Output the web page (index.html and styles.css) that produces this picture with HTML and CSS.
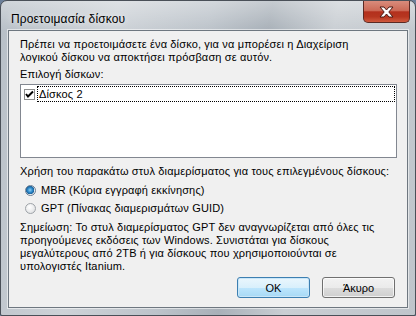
FILE: index.html
```html
<!DOCTYPE html>
<html lang="el">
<head>
    <meta charset="UTF-8">
    <meta name="viewport" content="width=device-width, initial-scale=1.0">
    <title>Προετοιμασία δίσκου</title>
    <link rel="stylesheet" href="styles.css">
</head>
<body>
<div class="window">
    <div class="titlebar">
        <span class="title">Προετοιμασία δίσκου</span>
        <div class="close-btn">
            <svg width="17" height="12" viewBox="0 0 17 12">
                <path d="M2 1 L6 1 L8.5 4 L11 1 L15 1 L10.8 6 L15 11 L11 11 L8.5 8 L6 11 L2 11 L6.2 6 Z"
                      fill="#fff" stroke="#4a1a14" stroke-width="1" stroke-linejoin="round"/>
            </svg>
        </div>
    </div>
    <div class="client">
        <p class="intro">Πρέπει να προετοιμάσετε ένα δίσκο, για να μπορέσει η Διαχείριση<br>λογικού δίσκου να αποκτήσει πρόσβαση σε αυτόν.</p>
        <div class="label">Επιλογή δίσκων:</div>
        <div class="listbox">
            <div class="list-item">
                <span class="checkbox">
                    <svg width="9" height="9" viewBox="0 0 9 9">
                        <path d="M1 4 L3 6.5 L8 1.5" fill="none" stroke="#000" stroke-width="2"/>
                    </svg>
                </span>
                <span class="item-text">Δίσκος 2</span>
            </div>
        </div>
        <div class="label style-label">Χρήση του παρακάτω στυλ διαμερίσματος για τους επιλεγμένους δίσκους:</div>
        <div class="radio-row">
            <span class="radio checked"></span>
            <span>MBR (Κύρια εγγραφή εκκίνησης)</span>
        </div>
        <div class="radio-row">
            <span class="radio"></span>
            <span>GPT (Πίνακας διαμερισμάτων GUID)</span>
        </div>
        <p class="note">Σημείωση: Το στυλ διαμερίσματος GPT δεν αναγνωρίζεται από όλες τις<br>προηγούμενες εκδόσεις των Windows. Συνιστάται για δίσκους<br>μεγαλύτερους από 2TB ή για δίσκους που χρησιμοποιούνται σε<br>υπολογιστές Itanium.</p>
        <div class="buttons">
            <button class="btn default">OK</button>
            <button class="btn">Άκυρο</button>
        </div>
    </div>
</div>
</body>
</html>
```

FILE: styles.css
```css
body {
    margin: 0;
    width: 416px;
    height: 316px;
    background: #6b7f99;
    font-family: "Liberation Sans", Arial, sans-serif;
    font-size: 11px;
    overflow: hidden;
}

.window {
    width: 416px;
    height: 316px;
    box-sizing: border-box;
    border: 1px solid #4a5058;
    border-radius: 7px 7px 2px 2px;
    padding: 0 7px 7px 7px;
    background:
        linear-gradient(to bottom, rgba(255, 255, 255, 0.35), rgba(255, 255, 255, 0) 30px),
        linear-gradient(100deg, #b7bfc7 0%, #cdd2d7 25%, #bcc3ca 45%, #a8b0b8 58%, #c9ced3 72%, #bfc5cb 100%);
    display: flex;
    flex-direction: column;
}

.titlebar {
    height: 29px;
    display: flex;
    align-items: flex-start;
}

.title {
    font-size: 12px;
    letter-spacing: 0.15px;
    color: #000;
    margin: 11px 0 0 3px;
    text-shadow: 0 0 6px rgba(255, 255, 255, 0.9);
}

.close-btn {
    flex: 0 0 45px;
    margin-left: auto;
    margin-right: -2px;
    height: 21px;
    border: 1px solid #5a2a24;
    border-top: none;
    border-radius: 0 0 5px 5px;
    background: linear-gradient(to bottom, #d98c7c 0%, #cc6a57 45%, #b3301d 52%, #b63620 75%, #d05a3e 100%);
    display: flex;
    align-items: center;
    justify-content: center;
}

.client {
    flex: 1;
    background: #f0f0f0;
    border: 1px solid #6e7780;
    box-shadow: 0 0 0 1px rgba(255, 255, 255, 0.55);
    padding: 7px 12px 9px 11px;
    color: #000;
    line-height: 13px;
    letter-spacing: 0.15px;
    display: flex;
    flex-direction: column;
}

.intro {
    margin: 0;
}

.label {
    margin-top: 4px;
}

.listbox {
    margin-top: 3px;
    height: 71px;
    width: 371px;
    background: #fff;
    border: 1px solid #828790;
    padding: 1px 1px 0 3px;
}

.list-item {
    display: flex;
    align-items: center;
    height: 16px;
}

.checkbox {
    width: 11px;
    height: 11px;
    box-sizing: border-box;
    border: 1px solid #8e8f8f;
    background: #fff;
    display: flex;
    align-items: center;
    justify-content: center;
    margin-right: 2px;
}

.item-text {
    flex: 1;
    height: 14px;
    line-height: 14px;
    padding-left: 1px;
    border: 1px dotted #000;
}

.style-label {
    margin-top: 7px;
}

.radio-row {
    display: flex;
    align-items: center;
    height: 18px;
    padding-left: 5px;
}

.style-label + .radio-row {
    margin-top: 3px;
}

.radio {
    width: 11px;
    height: 11px;
    border-radius: 50%;
    border: 1px solid #9ea3a8;
    background: radial-gradient(circle at 40% 35%, #ffffff, #d8dadc);
    margin-right: 5px;
    box-sizing: border-box;
}

.radio.checked {
    border-color: #6a7f95;
    background: radial-gradient(circle at 45% 45%, #8ed0f5 0, #2a86c7 2.5px, #1b5f97 4px, #f4f4f4 4.5px, #d5d8da 100%);
}

.note {
    margin: 4px 0 0 0;
}

.buttons {
    margin-top: auto;
    display: flex;
    justify-content: flex-end;
    gap: 12px;
}

.btn {
    width: 73px;
    height: 21px;
    font-family: "Liberation Sans", Arial, sans-serif;
    font-size: 11px;
    color: #000;
    border: 1px solid #707070;
    border-radius: 3px;
    background: linear-gradient(to bottom, #f2f2f2 0%, #ebebeb 50%, #dddddd 50%, #cfcfcf 100%);
    box-shadow: inset 0 0 0 1px rgba(255, 255, 255, 0.7);
    padding: 0;
}

.btn.default {
    border-color: #3c7fb1;
    background: linear-gradient(to bottom, #eaf6fd 0%, #d9f0fc 50%, #bee6fd 50%, #a7d9f5 100%);
    box-shadow: inset 0 0 0 1px #c9e6f8;
}
```
